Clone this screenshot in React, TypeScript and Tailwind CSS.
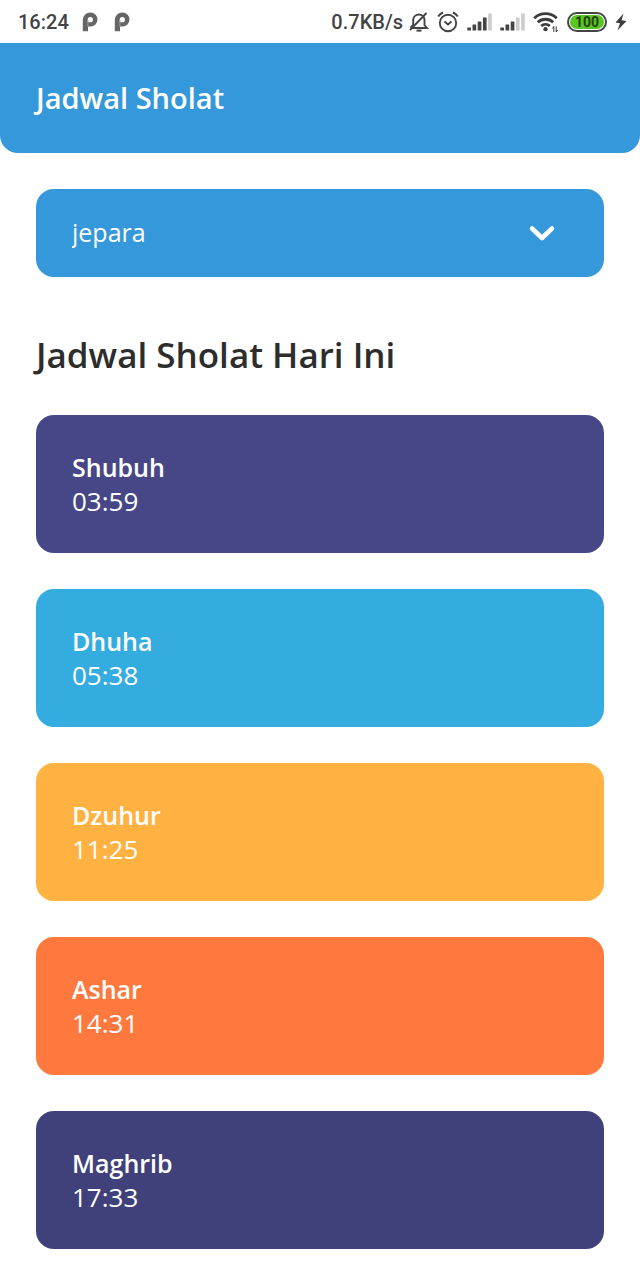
import { useState } from "react";

const prayers = [
  { name: "Shubuh", time: "03:59", color: "bg-[#474787]" },
  { name: "Dhuha", time: "05:38", color: "bg-[#34ace0]" },
  { name: "Dzuhur", time: "11:25", color: "bg-[#ffb142]" },
  { name: "Ashar", time: "14:31", color: "bg-[#ff793f]" },
  { name: "Maghrib", time: "17:33", color: "bg-[#40407a]" },
];

const cities = ["jepara", "kudus", "semarang"];

function ParkingIcon() {
  return (
    <svg width="16" height="20" viewBox="0 0 16 20" aria-hidden="true">
      <path
        d="M0.8 19.3V7.8A7.3 7.3 0 0 1 8.1 0.5H8.5A7 7 0 0 1 8.5 14.5H6V19.3Z M6.2 10.3H8.3A2.6 2.6 0 1 0 5.7 7.7V10.3Z"
        fill="#666"
        fillRule="evenodd"
      />
      <path d="M5.9 8V14.5" stroke="#a0a0a0" strokeWidth=".9" />
    </svg>
  );
}

function BellOffIcon() {
  return (
    <svg width="20" height="22" viewBox="0 0 20 22" fill="none" stroke="#444" strokeWidth="1.9" aria-hidden="true">
      <path d="M3.5 17H18L15.5 14V8.5A5.7 5.7 0 0 0 4.2 8.5V14L1.5 17" />
      <path d="M1 19L17.5 2" />
      <path d="M7.5 19.6H12.5" strokeWidth="2" />
    </svg>
  );
}

function AlarmIcon() {
  return (
    <svg width="22" height="22" viewBox="0 0 22 22" fill="none" stroke="#444" strokeWidth="1.9" aria-hidden="true">
      <circle cx="11" cy="12" r="8.2" />
      <path d="M1.2 5.5A12 12 0 0 1 6 1.5M16 1.5A12 12 0 0 1 20.8 5.5" strokeWidth="2" />
      <path d="M7.5 10.5L11 13.5L14.5 10.5" />
    </svg>
  );
}

function SignalIcon({ level }: { level: number }) {
  return (
    <svg width="25" height="18" viewBox="0 0 25 18" aria-hidden="true">
      {[3, 6, 9, 13, 17].map((h, i) => (
        <rect key={h} x={i * 5.2 + 0.3} y={17.5 - h} width="3.7" height={h} rx=".5" fill={i < level ? "#444" : "#ccc"} />
      ))}
    </svg>
  );
}

function WifiIcon() {
  return (
    <svg width="26" height="22" viewBox="0 0 26 22" fill="none" stroke="#3c3c3c" strokeWidth="2.8" aria-hidden="true">
      <path d="M1.2 7.2A16.5 16.5 0 0 1 23.8 7.2" />
      <path d="M4.8 11.3A11.2 11.2 0 0 1 20.2 11.3" />
      <path d="M8.2 15A6.3 6.3 0 0 1 16.8 15" />
      <circle cx="12.5" cy="18.2" r="2.1" fill="#3c3c3c" stroke="none" />
      <path d="M20.8 21V15.5L19.4 17.5M23.2 15.5V21L24.6 19" strokeWidth="1" />
    </svg>
  );
}

function BoltIcon() {
  return (
    <svg width="12" height="18" viewBox="0 0 12 18" fill="#3c3c3c" aria-hidden="true">
      <path d="M8.5 0.5L0.5 9.5L5 10.3L2.5 17.5L11.5 8L6.5 7.2Z" />
    </svg>
  );
}

export default function App() {
  const [city, setCity] = useState("jepara");
  return (
    <div className="min-h-screen bg-white pb-[30px] font-['Open_Sans',sans-serif]">
      <div className="flex h-[43px] items-center justify-between pr-[13px] pl-[18px] font-['Roboto',sans-serif] text-xl font-medium text-[#444]">
        <div className="flex items-center">
          <span className="mr-[13px]">16:24</span>
          <div className="flex gap-4">
            <ParkingIcon />
            <ParkingIcon />
          </div>
        </div>
        <div className="flex items-center">
          <span className="mr-1.5">0.7KB/s</span>
          <div className="flex items-center gap-2">
            <BellOffIcon />
            <AlarmIcon />
            <SignalIcon level={4} />
            <SignalIcon level={3} />
            <WifiIcon />
            <div className="flex h-5 w-10 rounded-full border-2 border-[#444] p-px">
              <span className="flex flex-1 items-center justify-center rounded-full bg-[#5ac624] text-sm leading-none font-bold text-[#24420f]">100</span>
            </div>
            <BoltIcon />
          </div>
        </div>
      </div>
      <header className="rounded-b-[18px] bg-[#3498db] px-9 py-9">
        <h1 className="text-[29px] leading-[38px] font-semibold text-white">Jadwal Sholat</h1>
      </header>
      <main className="px-9 pt-9">
        <div className="relative">
          <select
            aria-label="Kota"
            value={city}
            onChange={(e) => setCity(e.target.value)}
            className="block h-[88px] w-full appearance-none rounded-[18px] bg-[#3498db] px-9 text-[25px] text-white"
          >
            {cities.map((c) => (
              <option key={c} value={c}>{c}</option>
            ))}
          </select>
          <div className="pointer-events-none absolute inset-y-0 right-12 flex items-center">
            <svg width="28" height="18" viewBox="0 0 28 18" fill="none" stroke="white" strokeWidth="4.6" strokeLinecap="round" strokeLinejoin="round" aria-hidden="true">
              <path d="M4 4.5L14 14L24 4.5" />
            </svg>
          </div>
        </div>
        <h2 className="mt-[54px] text-[35px] leading-[48px] font-semibold text-[#2d2d2d]">Jadwal Sholat Hari Ini</h2>
        <div className="mt-9 flex flex-col gap-9">
          {prayers.map((p) => (
            <section key={p.name} className={`rounded-[18px] px-9 pt-9 pb-[35px] text-white ${p.color}`}>
              <h3 className="text-[25px] leading-[33px] font-semibold">{p.name}</h3>
              <p className="text-[26px] leading-[34px]">{p.time}</p>
            </section>
          ))}
        </div>
      </main>
    </div>
  );
}
